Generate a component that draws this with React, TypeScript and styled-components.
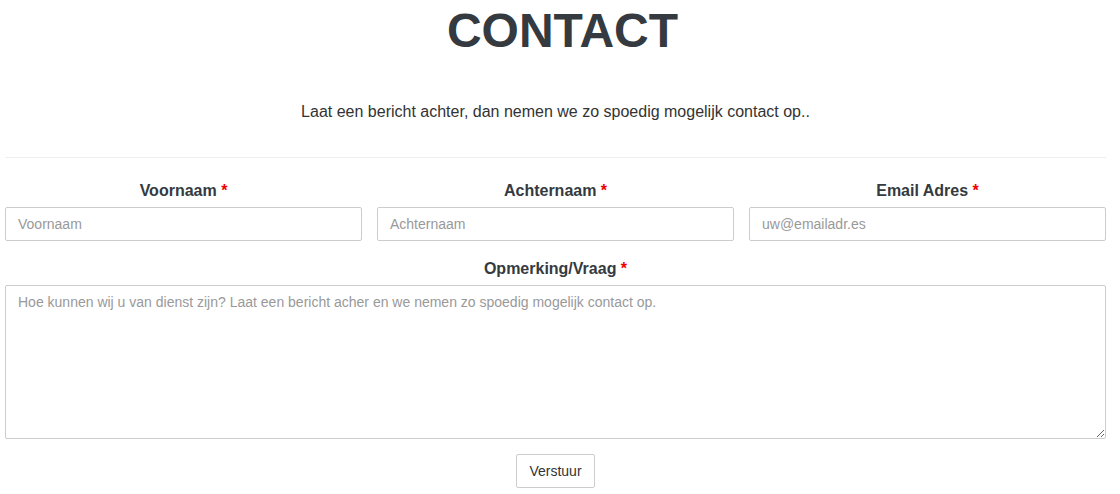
import React from "react";
import styled, { createGlobalStyle } from "styled-components";

const Global = createGlobalStyle`
  html, body { margin: 0; padding: 0; background: #fff; }
  body { font-family: "Liberation Sans", Arial, sans-serif; color: #333; }
  * { box-sizing: border-box; }
`;

const Page = styled.div`
  width: 1120px;
  padding: 0 14px 0 5px;
`;

const Title = styled.h1`
  margin: 0;
  padding: 2px 0 0 14px;
  font-size: 48px;
  line-height: 1.2;
  font-weight: 700;
  color: #343a40;
  text-align: center;
`;

const Lead = styled.p`
  margin: 40px 0 0;
  font-size: 16px;
  line-height: 24px;
  text-align: center;
  color: #333;
`;

const Rule = styled.hr`
  margin: 33px 0 0;
  border: 0;
  border-top: 1px solid #eee;
`;

const Row = styled.div`
  display: grid;
  grid-template-columns: repeat(3, 1fr);
  column-gap: 15px;
  margin-top: 21px;
`;

const Field = styled.div`
  display: flex;
  flex-direction: column;
`;

const Label = styled.label`
  font-size: 16px;
  line-height: 24px;
  font-weight: 700;
  color: #343a40;
  text-align: center;
  margin-bottom: 4px;
`;

const Req = styled.span`
  color: #e00;
`;

const Input = styled.input`
  height: 34px;
  padding: 0 12px;
  border: 1px solid #ccc;
  border-radius: 2px;
  font-family: "Liberation Sans", Arial, sans-serif;
  font-size: 14px;
  color: #555;
  &::placeholder { color: #999; }
`;

const Full = styled(Field)`
  margin-top: 16px;
`;

const Area = styled.textarea`
  height: 154px;
  padding: 7px 12px;
  border: 1px solid #ccc;
  border-radius: 2px;
  font-family: "Liberation Sans", Arial, sans-serif;
  font-size: 14px;
  line-height: 1.42857;
  color: #555;
  resize: vertical;
  &::placeholder { color: #999; }
`;

const Actions = styled.div`
  display: flex;
  justify-content: center;
  margin-top: 15px;
`;

const Button = styled.button`
  height: 34px;
  padding: 0 12px;
  background: #fff;
  border: 1px solid #ccc;
  border-radius: 2px;
  font-family: "Liberation Sans", Arial, sans-serif;
  font-size: 14px;
  color: #333;
`;

export default function App() {
  return (
    <Page>
      <Global />
      <Title>CONTACT</Title>
      <Lead>Laat een bericht achter, dan nemen we zo spoedig mogelijk contact op..</Lead>
      <Rule />
      <Row>
        <Field>
          <Label>Voornaam <Req>*</Req></Label>
          <Input placeholder="Voornaam" />
        </Field>
        <Field>
          <Label>Achternaam <Req>*</Req></Label>
          <Input placeholder="Achternaam" />
        </Field>
        <Field>
          <Label>Email Adres <Req>*</Req></Label>
          <Input placeholder="uw@emailadr.es" />
        </Field>
      </Row>
      <Full>
        <Label>Opmerking/Vraag <Req>*</Req></Label>
        <Area placeholder="Hoe kunnen wij u van dienst zijn? Laat een bericht acher en we nemen zo spoedig mogelijk contact op." />
      </Full>
      <Actions>
        <Button>Verstuur</Button>
      </Actions>
    </Page>
  );
}
